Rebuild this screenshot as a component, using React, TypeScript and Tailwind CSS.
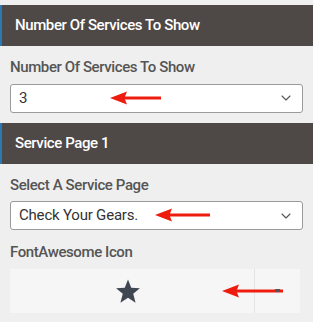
import { ChevronDown } from "lucide-react";

function Arrow({ width }: { width: number }) {
  return (
    <svg width={width} height="14" viewBox={`0 0 ${width} 14`} className="absolute">
      <polygon points="0,7 17,0.5 15,5.5 15,8.5 17,13.5" fill="#ee1c0e" />
      <rect x="14" y="5.5" width={width - 14} height="3" fill="#ee1c0e" />
    </svg>
  );
}

function SectionHeader({ title }: { title: string }) {
  return (
    <div className="flex h-[41px] items-center border-l-2 border-[#2a78b4] bg-[#4e4846] pl-[13px] text-[15px] font-medium tracking-[-0.4px] text-white">
      {title}
    </div>
  );
}

function Label({ text, top }: { text: string; top: number }) {
  return (
    <div className="px-[10px] pb-[5px] text-[15px] font-medium tracking-[-0.4px] text-[#555]" style={{ paddingTop: top }}>
      {text}
    </div>
  );
}

function SelectBox({ value, arrowLeft, arrowWidth }: { value: string; arrowLeft: number; arrowWidth: number }) {
  return (
    <div className="relative mx-[10px] flex h-[29px] items-center rounded-[3px] border border-[#9a9a9a] bg-white pl-[8px] pr-[8px] text-[15px] tracking-[-0.2px] text-[#333]">
      <span className="flex-1">{value}</span>
      <ChevronDown size={16} strokeWidth={1.6} className="text-[#555]" />
      <div className="absolute top-[6px]" style={{ left: arrowLeft }}>
        <Arrow width={arrowWidth} />
      </div>
    </div>
  );
}

export default function App() {
  return (
    <div className="h-[322px] w-[313px] overflow-hidden bg-[#efefef] pt-[5px]" style={{ fontFamily: "Roboto, 'Liberation Sans', sans-serif" }}>
      <SectionHeader title="Number Of Services To Show" />
      <Label text="Number Of Services To Show" top={10} />
      <SelectBox value="3" arrowLeft={99} arrowWidth={51} />
      <div className="h-[10px]" />
      <SectionHeader title="Service Page 1" />
      <Label text="Select A Service Page" top={10} />
      <SelectBox value="Check Your Gears." arrowLeft={144} arrowWidth={55} />
      <Label text="FontAwesome Icon" top={11} />
      <div className="relative mx-[10px] flex h-[44px] w-[290px] bg-[#f6f6f6]">
        <div className="flex flex-1 items-center justify-center pr-[6px]">
          <svg width="26" height="25" viewBox="0 0 24 23" className="mr-[2px] mt-[1px]">
            <polygon points="12,0.5 15,8 23,8.4 16.8,13.6 19,21.8 12,17.2 5,21.8 7.2,13.6 1,8.4 9,8" fill="#3e4752" />
          </svg>
        </div>
        <div className="w-[46px] border-l border-[#e4e4e4]" />
        <div className="absolute left-[212px] top-[15px]">
          <Arrow width={61} />
        </div>
        <div className="absolute left-[265px] top-[20px] h-[3px] w-[5px] bg-[#555]" />
      </div>
    </div>
  );
}
